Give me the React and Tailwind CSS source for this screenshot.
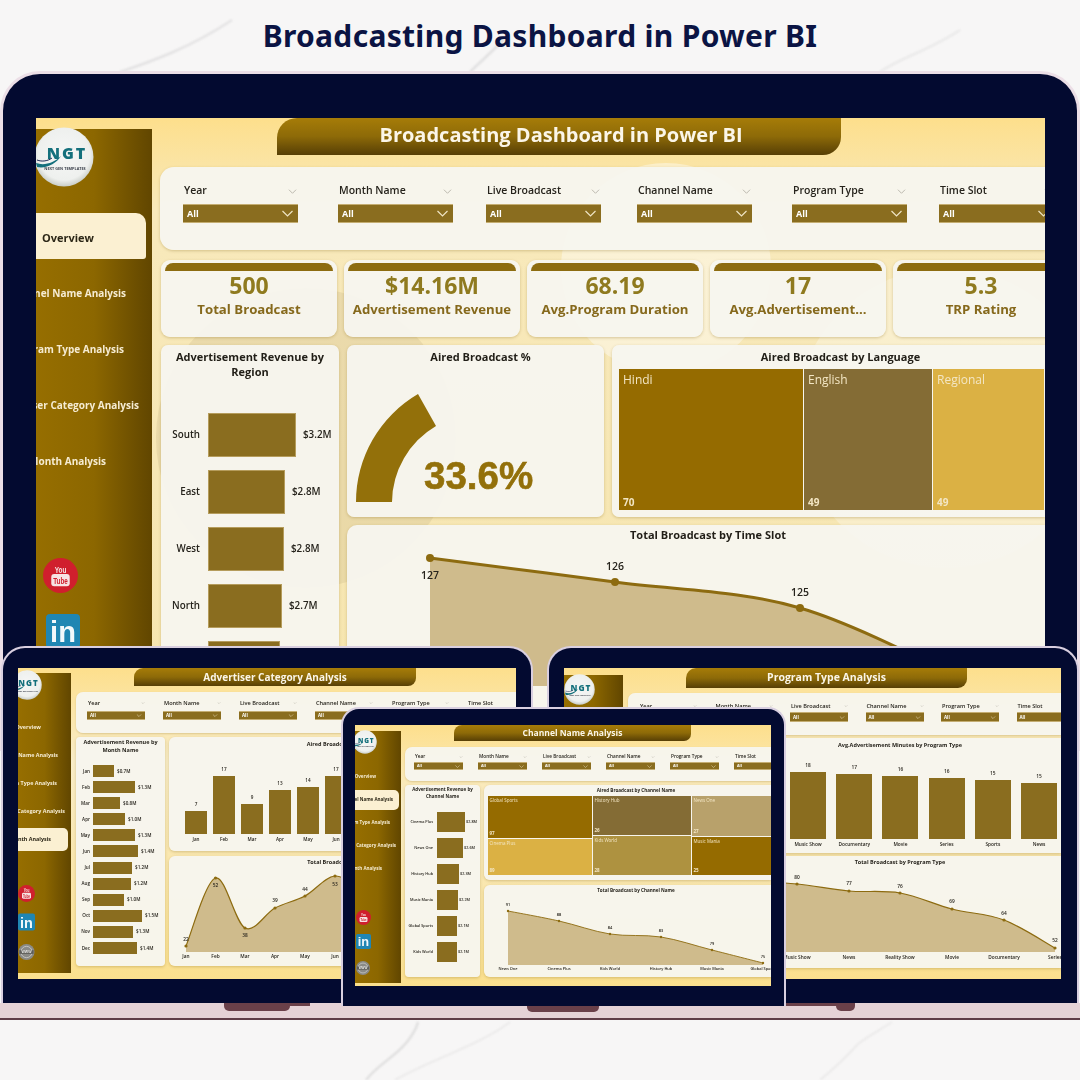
import React from 'react';

const BAR = 'bg-[#8a6d1f]';
const CARD = 'bg-[#f7f5ef]/95 shadow-[0_1px_3px_rgba(130,100,20,0.3)]';
const BAND = 'bg-gradient-to-b from-[#a67c08] via-[#8d6a08] to-[#573f05]';
const SIDE = 'bg-gradient-to-r from-[#966e00] via-[#8c6700] to-[#614600]';
const SCREEN = 'bg-gradient-to-b from-[#fddf8c] via-[#f9edc8] via-30% to-[#fbe08e]';
const BIGSCREEN = 'bg-gradient-to-b from-[#fddf8c] via-[#f8e9bb] via-15% to-[#f6e5ae]';

function smooth(pts) {
  let d = `M${pts[0][0]},${pts[0][1]}`;
  for (let i = 0; i < pts.length - 1; i++) {
    const p0 = pts[i - 1] || pts[i], p1 = pts[i], p2 = pts[i + 1], p3 = pts[i + 2] || p2;
    const c1x = p1[0] + (p2[0] - p0[0]) / 6, c1y = p1[1] + (p2[1] - p0[1]) / 6;
    const c2x = p2[0] - (p3[0] - p1[0]) / 6, c2y = p2[1] - (p3[1] - p1[1]) / 6;
    d += ` C${c1x},${c1y} ${c2x},${c2y} ${p2[0]},${p2[1]}`;
  }
  return d;
}

function LineChart({ box, pts, base, fs, sw = 1, r = 1.6, xfs, xy, className }) {
  const line = smooth(pts.map((p) => [p.x, p.y]));
  const area = `${line} L${pts[pts.length - 1].x},${base} L${pts[0].x},${base} Z`;
  return (
    <svg viewBox={box.join(' ')} width={box[2]} height={box[3]} className={'block flex-none ' + (className || '')}>
      <path d={area} fill="#cfbb8c" />
      <path d={line} fill="none" stroke="#8d6b10" strokeWidth={sw} />
      {pts.map((p) => (
        <g key={p.x}>
          <circle cx={p.x} cy={p.y} r={r} fill="#8d6b10" />
          <text x={p.x} y={p.ly} textAnchor="middle" fontSize={fs} fontWeight="600" fill="#26231c" fontFamily="'Open Sans',sans-serif">{p.v}</text>
          {p.n ? <text x={p.x} y={xy} textAnchor="middle" fontSize={xfs} fontWeight="600" fill="#26231c" fontFamily="'Open Sans',sans-serif">{p.n}</text> : null}
        </g>
      ))}
    </svg>
  );
}

function Chev({ className }) {
  return (
    <svg viewBox="0 0 12 7" className={className} fill="none" stroke="currentColor" strokeWidth="1.2">
      <path d="M1 1l5 5 5-5" />
    </svg>
  );
}

function Logo({ className }) {
  return (
    <svg viewBox="0 0 60 60" className={className}>
      <defs>
        <radialGradient id="lg" cx="50%" cy="45%" r="55%">
          <stop offset="0%" stopColor="#f6f7f6" />
          <stop offset="80%" stopColor="#eef0ee" />
          <stop offset="100%" stopColor="#c9cdc8" />
        </radialGradient>
      </defs>
      <circle cx="30" cy="30" r="29.5" fill="url(#lg)" />
      <text x="33" y="32" textAnchor="middle" fontSize="16" fontWeight="800" letterSpacing="2" fill="#14707c" fontFamily="'Open Sans',sans-serif">NGT</text>
      <path d="M2 36 C10 39 20 36 27 29 C22 37 12 42 3 40 Z" fill="#14707c" />
      <path d="M3 33 C8 35 14 34 18 31" fill="none" stroke="#1c2a55" strokeWidth="1" />
      <text x="31" y="43" textAnchor="middle" fontSize="3.8" fontWeight="700" fill="#3a3f4a" fontFamily="'Open Sans',sans-serif">NEXT GEN TEMPLATES</text>
    </svg>
  );
}

function YouTube({ className }) {
  return (
    <svg viewBox="0 0 36 36" className={className}>
      <circle cx="18" cy="18" r="18" fill="#d01f2d" />
      <text x="18" y="15" textAnchor="middle" fontSize="10" fontWeight="700" fill="#f6e4e4" fontFamily="'Liberation Sans',sans-serif" textLength="12" lengthAdjust="spacingAndGlyphs">You</text>
      <rect x="8.5" y="16.5" width="19" height="12.5" rx="3" fill="#f6e4e4" />
      <text x="18" y="26.5" textAnchor="middle" fontSize="9.5" fontWeight="700" fill="#d01f2d" fontFamily="'Liberation Sans',sans-serif" textLength="15" lengthAdjust="spacingAndGlyphs">Tube</text>
    </svg>
  );
}

function LinkedIn({ className }) {
  return (
    <svg viewBox="0 0 34 34" className={className}>
      <rect width="34" height="34" rx="4" fill="#1f86b3" />
      <text x="17" y="28" textAnchor="middle" fontSize="29" fontWeight="700" fill="#f2f8fb" fontFamily="'Liberation Sans',sans-serif">in</text>
    </svg>
  );
}

function Globe({ className }) {
  return (
    <svg viewBox="0 0 34 34" className={className}>
      <circle cx="17" cy="17" r="17" fill="#8a8a86" />
      <circle cx="17" cy="17" r="12" fill="none" stroke="#d8d8d4" strokeWidth="1.5" />
      <rect x="2" y="13" width="30" height="8" fill="#5e5e5a" />
      <text x="17" y="20" textAnchor="middle" fontSize="7.5" fontWeight="700" fill="#f0f0ee" fontFamily="'Liberation Sans',sans-serif">WWW</text>
    </svg>
  );
}

const LABELS = ['Year', 'Month Name', 'Live Broadcast', 'Channel Name', 'Program Type', 'Time Slot'];

function MiniFilters({ panel, item, label, dd, all, chev, small }) {
  return (
    <div className={'relative flex rounded-l-[7px] bg-[#f7f5ef]/95 shadow-[0_1px_2px_rgba(130,100,20,0.25)] ' + panel}>
      {LABELS.map((t) => (
        <div key={t} className={'flex-none ' + item}>
          <div className={'flex items-center justify-between font-semibold text-[#26231c] whitespace-nowrap ' + label}>
            <span>{t}</span>
            <Chev className={'text-[#a8a49a] ' + small} />
          </div>
          <div className={'flex items-center justify-between border-t border-b border-[#c4ad72] px-[3px] ' + BAR + ' ' + dd}>
            <span className={'font-bold text-white ' + all}>All</span>
            <Chev className={'text-[#efe4c4] ' + chev} />
          </div>
        </div>
      ))}
    </div>
  );
}

function MenuRow({ t, w, h, active, fs, tab }) {
  if (active) {
    return (
      <div className={'flex items-center justify-end rounded-r-[5px] bg-[#fbf0d2] font-bold text-[#2b2616] whitespace-nowrap ' + tab + ' ' + fs}>
        <span>{t}</span>
      </div>
    );
  }
  return (
    <div className={'flex items-center justify-end font-bold text-[#f6ecd2] whitespace-nowrap ' + w + ' ' + h + ' ' + fs}>
      <span>{t}</span>
    </div>
  );
}

function Treemap({ cols, fs, className }) {
  return (
    <div className={'flex ' + className}>
      {cols.map((c) => (
        <div key={c.w} className={'flex flex-none flex-col gap-[1px] ' + c.w}>
          {c.cells.map((x) => (
            <div key={x.t} className={'flex flex-col justify-between px-[1.5px] py-[1px] text-[#f3e6c4] ' + x.h + ' ' + x.c + ' ' + fs}>
              <span>{x.t}</span>
              <span className="font-bold">{x.v}</span>
            </div>
          ))}
        </div>
      ))}
    </div>
  );
}

/* ---------- big laptop ---------- */
function Big() {
  const filters = [
    ['Year', 'w-[155px]'], ['Month Name', 'w-[148px]'], ['Live Broadcast', 'w-[151px]'],
    ['Channel Name', 'w-[155px]'], ['Program Type', 'w-[147px]'], ['Time Slot', 'w-[147px]'],
  ];
  const kpis = [
    ['500', 'Total Broadcast'], ['$14.16M', 'Advertisement Revenue'], ['68.19', 'Avg.Program Duration'],
    ['17', 'Avg.Advertisement...'], ['5.3', 'TRP Rating'],
  ];
  const regions = [
    ['South', 88, '$3.2M'], ['East', 77, '$2.8M'], ['West', 76, '$2.8M'], ['North', 74, '$2.7M'], ['Central', 72, '$2.6M'],
  ];
  return (
    <div className="absolute left-0 top-[71px] h-[680px] w-[1080px] rounded-t-[40px] border-x-[3px] border-t-[3px] border-[#ecdfe7] bg-[#030a30] pl-[33px] pt-[44px]">
      <div className={'relative flex h-[620px] w-[1009px] overflow-hidden blur-[0.3px] ' + BIGSCREEN}>
        <div className="absolute left-[525px] top-[45px] h-[210px] w-[210px] rounded-full bg-white/40" />
        <div className="absolute left-[120px] top-[170px] h-[300px] w-[300px] rounded-full bg-[#b9a778]/20" />
        <div className="absolute left-[760px] top-[150px] h-[300px] w-[300px] rounded-full bg-white/30" />

        <div className={'relative mt-[11px] flex w-[116px] flex-none flex-col ' + SIDE}>
          <Logo className="-ml-[2px] -mt-[2px] h-[60px] w-[60px]" />
          <div className="mt-[26px] flex h-[46px] w-[110px] items-center rounded-tr-[10px] rounded-br-[3px] bg-[#fbf0d2] pl-[6px] pt-[4px] text-[11px] font-bold text-[#2b2616]">Overview</div>
          <div className="mt-[6px]">
            <MenuRow t="Channel Name Analysis" w="w-[90px]" h="h-[56px]" fs="text-[10px]" />
            <MenuRow t="Program Type Analysis" w="w-[88px]" h="h-[56px]" fs="text-[10px]" />
            <MenuRow t="Advertiser Category Analysis" w="w-[103px]" h="h-[56px]" fs="text-[10px]" />
            <MenuRow t="Month Analysis" w="w-[70px]" h="h-[56px]" fs="text-[10px]" />
          </div>
          <YouTube className="ml-[7px] mt-[69px] h-[35px] w-[35px] flex-none" />
          <LinkedIn className="ml-[10px] mt-[21px] h-[34px] w-[34px] flex-none" />
        </div>

        <div className="relative flex w-[893px] flex-none flex-col">
          <div className={'ml-[125px] flex h-[37px] w-[564px] flex-none items-center justify-center rounded-tl-[20px] rounded-br-[18px] pb-[3px] pl-[4px] text-[20px] font-bold text-[#fbf6e8] ' + BAND}>
            <span>Broadcasting Dashboard in Power BI</span>
          </div>

          <div className="ml-[8px] mt-[12px] flex h-[83px] w-[885px] flex-none rounded-l-[14px] bg-[#f7f5ef]/95 pl-[23px] pt-[17px] shadow-[0_1px_3px_rgba(130,100,20,0.3)]">
            {filters.map(([t, w]) => (
              <div key={t} className={'flex-none ' + w}>
                <div className="flex h-[14px] w-[115px] items-center justify-between pl-[1px] pr-[1px] text-[10.5px] font-semibold text-[#26231c] whitespace-nowrap">
                  <span>{t}</span>
                  <Chev className="h-[5px] w-[9px] text-[#b4b0a6]" />
                </div>
                <div className={'mt-[6px] flex h-[19px] w-[115px] items-center justify-between border-y border-[#c4ad72] px-[4px] ' + BAR}>
                  <span className="text-[9px] font-bold text-white">All</span>
                  <Chev className="h-[7px] w-[13px] text-[#efe4c4]" />
                </div>
              </div>
            ))}
          </div>

          <div className="ml-[9px] mt-[10px] flex flex-none gap-[7px]">
            {kpis.map(([v, l]) => (
              <div key={l} className={'h-[77px] w-[176px] flex-none rounded-[9px] px-[4px] pt-[3px] text-center ' + CARD}>
                <div className="h-[8px] rounded-t-[8px] bg-[#8d6c10]" />
                <div className="mt-[1px] text-[23px] font-bold leading-[26px] text-[#8f7a1f]">{v}</div>
                <div className="mt-[1px] text-[13.2px] font-bold leading-[20px] text-[#86691c] whitespace-nowrap">{l}</div>
              </div>
            ))}
          </div>

          <div className="ml-[9px] mt-[8px] flex flex-none gap-[8px]">
            <div className={'h-[400px] w-[178px] flex-none rounded-[7px] pt-[4px] ' + CARD}>
              <div className="text-center text-[11px] font-bold leading-[15px] text-[#211e17]">Advertisement Revenue by<br />Region</div>
              <div className="mt-[34px] flex flex-col gap-[13px]">
                {regions.map(([n, w, v]) => (
                  <div key={n} className="flex h-[44px] items-center text-[9.8px] font-semibold text-[#26231c]">
                    <span className="w-[39px] text-right">{n}</span>
                    <div className={'ml-[8px] h-full border border-[#b59c5c] ' + BAR} style={{ width: w }} />
                    <span className="ml-[7px]">{v}</span>
                  </div>
                ))}
              </div>
            </div>

            <div className="flex w-[698px] flex-none flex-col gap-[8px]">
              <div className="flex h-[172px] gap-[8px]">
                <div className={'relative h-full w-[257px] flex-none rounded-[7px] pt-[4px] ' + CARD}>
                  <div className="pl-[10px] text-center text-[11px] font-bold leading-[16px] text-[#211e17]">Aired Broadcast %</div>
                  <div className="mt-[5px] flex h-[124px] items-end">
                    <svg viewBox="357 394 80 108" width="80" height="108" className="ml-[9px] mb-[-8px] flex-none">
                      <path d="M357,502 A125,125 0 0 1 419,394 L437,426 A89,89 0 0 0 393,502 Z" fill="#93700a" />
                    </svg>
                    <span className="-ml-[12px] mb-[-2px] text-[38.5px] font-bold leading-[40px] text-[#93700a] [-webkit-text-stroke:0.6px_#93700a] [font-family:'Liberation_Sans',sans-serif]">33.6%</span>
                  </div>
                </div>
                <div className={'h-full w-[433px] flex-none rounded-l-[7px] pt-[4px] ' + CARD}>
                  <div className="pl-[24px] text-center text-[11px] font-bold leading-[16px] text-[#211e17]">Aired Broadcast by Language</div>
                  <div className="ml-[7px] mt-[4px] flex h-[141px] gap-[1px] text-[12px] text-[#f3e6c4]">
                    <div className="flex w-[184px] flex-none flex-col justify-between bg-[#956b00] px-[4px] pt-[2px]"><span>Hindi</span><span className="text-[10px] font-bold">70</span></div>
                    <div className="flex w-[128px] flex-none flex-col justify-between bg-[#846c35] px-[4px] pt-[2px]"><span>English</span><span className="text-[10px] font-bold">49</span></div>
                    <div className="flex w-[111px] flex-none flex-col justify-between bg-[#dbb144] px-[4px] pt-[2px]"><span>Regional</span><span className="text-[10px] font-bold">49</span></div>
                  </div>
                </div>
              </div>

              <div className={'h-[240px] rounded-l-[10px] pt-[2px] ' + CARD}>
                <div className="pl-[24px] text-center text-[11px] font-bold leading-[16px] text-[#211e17]">Total Broadcast by Time Slot</div>
                <LineChart
                  box={[347, 543, 698, 160]}
                  base={686}
                  fs={10.5}
                  sw={3}
                  r={4}
                  pts={[
                    { x: 430, y: 558, ly: 579, v: '127' },
                    { x: 615, y: 582, ly: 570, v: '126' },
                    { x: 800, y: 608, ly: 596, v: '125' },
                    { x: 985, y: 690, ly: 680, v: '' },
                  ]}
                />
              </div>
            </div>
          </div>
        </div>
      </div>
    </div>
  );
}

/* ---------- left small laptop ---------- */
function LeftLaptop() {
  const months = [['Jan', 21, '$0.7M'], ['Feb', 42, '$1.3M'], ['Mar', 27, '$0.8M'], ['Apr', 32, '$1.0M'], ['May', 42, '$1.3M'], ['Jun', 45, '$1.4M'], ['Jul', 39, '$1.2M'], ['Aug', 38, '$1.2M'], ['Sep', 31, '$1.0M'], ['Oct', 49, '$1.5M'], ['Nov', 40, '$1.3M'], ['Dec', 44, '$1.4M']];
  const bars = [['Jan', 7, 23], ['Feb', 17, 58], ['Mar', 9, 30], ['Apr', 13, 44], ['May', 14, 47], ['Jun', 17, 58]];
  return (
    <div className="absolute left-[1px] top-[646px] h-[357px] w-[532px] rounded-t-[24px] border-x-2 border-t-2 border-[#d9cfe0] bg-[#030a30] pl-[15px] pt-[20px]">
      <div className={'relative flex h-[311px] w-[498px] overflow-hidden blur-[0.3px] ' + SCREEN}>
        <div className={'mt-[5px] flex h-[300px] w-[53px] flex-none flex-col ' + SIDE}>
          <Logo className="-ml-[6px] -mt-[3px] h-[30px] w-[30px] flex-none" />
          <div className="mt-[13px] flex flex-col">
            <MenuRow t="Overview" w="w-[23px]" h="h-[28px]" fs="text-[5.4px]" />
            <MenuRow t="Channel Name Analysis" w="w-[40px]" h="h-[28px]" fs="text-[5.4px]" />
            <MenuRow t="Program Type Analysis" w="w-[39px]" h="h-[28px]" fs="text-[5.4px]" />
            <MenuRow t="Advertiser Category Analysis" w="w-[47px]" h="h-[28px]" fs="text-[5.4px]" />
            <MenuRow active t="Month Analysis" fs="text-[5.4px]" tab="h-[23px] w-[50px] pr-[17px] my-[3px]" />
          </div>
          <YouTube className="mt-[31px] h-[17px] w-[17px] flex-none" />
          <LinkedIn className="mt-[11px] h-[18px] w-[17px] flex-none" />
          <Globe className="mt-[13px] h-[16px] w-[17px] flex-none" />
        </div>
        <div className="flex w-[445px] flex-none flex-col">
          <div className={'ml-[63px] flex h-[18px] w-[282px] flex-none items-center justify-center rounded-tl-[9px] rounded-br-[8px] text-[10px] font-bold text-[#fbf6e8] ' + BAND}>Advertiser Category Analysis</div>
          <MiniFilters
            panel="ml-[5px] mt-[6px] h-[41px] w-[440px] flex-none pl-[11px] pt-[7px]"
            item="w-[76px]"
            label="h-[8px] w-[58px] text-[5.6px] pl-[1px]"
            dd="mt-[4px] h-[9px] w-[58px]"
            all="text-[4.5px]"
            chev="h-[3px] w-[6px]"
            small="h-[2px] w-[4px]"
          />
          <div className="ml-[5px] mt-[4px] flex gap-[4px]">
            <div className={'h-[229px] w-[89px] flex-none rounded-[4px] pt-[1px] ' + CARD}>
              <div className="text-center text-[5.5px] font-bold leading-[8px] text-[#211e17]">Advertisement Revenue by<br />Month Name</div>
              <div className="mt-[11px] flex flex-col gap-[4.1px]">
                {months.map(([m, w, v]) => (
                  <div key={m} className="flex h-[12px] items-center text-[4.6px] font-semibold text-[#26231c]">
                    <span className="w-[14px] text-right">{m}</span>
                    <div className={'ml-[3px] h-full ' + BAR} style={{ width: w }} />
                    <span className="ml-[3px]">{v}</span>
                  </div>
                ))}
              </div>
            </div>
            <div className="flex w-[347px] flex-none flex-col gap-[5px]">
              <div className={'h-[114px] rounded-l-[6px] pt-[3px] ' + CARD}>
                <div className="pl-[18px] text-center text-[5.5px] font-bold leading-[8px] text-[#211e17]">Aired Broadcast by Month Name</div>
                <div className="ml-[13px] mt-[15px] flex h-[80px] items-end">
                  {bars.map(([m, v, h]) => (
                    <div key={m} className="flex w-[28px] flex-none flex-col items-center text-[4.6px] font-semibold text-[#26231c]">
                      <span className="mb-[3px]">{v}</span>
                      <div className={'w-[22px] ' + BAR} style={{ height: h }} />
                      <span className="mt-[2px] h-[7px]">{m}</span>
                    </div>
                  ))}
                </div>
              </div>
              <div className={'h-[110px] rounded-l-[6px] pt-[2px] ' + CARD}>
                <div className="pl-[18px] text-center text-[5.5px] font-bold leading-[8px] text-[#211e17]">Total Broadcast by Month Name</div>
                <LineChart
                  box={[169, 866, 347, 100]}
                  base={952}
                  fs={4.8}
                  xfs={4.8}
                  xy={958}
                  sw={1.2}
                  r={1.6}
                  pts={[
                    { x: 186, y: 946, ly: 941, v: '22', n: 'Jan' },
                    { x: 215.5, y: 878, ly: 887, v: '52', n: 'Feb' },
                    { x: 245, y: 928, ly: 937, v: '38', n: 'Mar' },
                    { x: 275, y: 908, ly: 902, v: '39', n: 'Apr' },
                    { x: 305, y: 896, ly: 891, v: '44', n: 'May' },
                    { x: 335, y: 876, ly: 886, v: '53', n: 'Jun' },
                    { x: 365, y: 892, ly: 887, v: '', n: '' },
                  ]}
                />
              </div>
            </div>
          </div>
        </div>
      </div>
    </div>
  );
}

/* ---------- right small laptop ---------- */
function RightLaptop() {
  const bars = [['Music Show', 18, 67], ['Documentary', 17, 65], ['Movie', 16, 63], ['Series', 16, 61], ['Sports', 15, 59], ['News', 15, 56]];
  return (
    <div className="absolute left-[547px] top-[646px] h-[357px] w-[532px] rounded-t-[24px] border-x-2 border-t-2 border-[#d9cfe0] bg-[#030a30] pl-[15px] pt-[20px]">
      <div className={'relative flex h-[311px] w-[497px] overflow-hidden blur-[0.3px] ' + SCREEN}>
        <div className={'mt-[7px] flex h-[298px] w-[59px] flex-none flex-col ' + SIDE}>
          <Logo className="-mt-[1px] h-[31px] w-[31px] flex-none" />
        </div>
        <div className="flex w-[438px] flex-none flex-col">
          <div className={'ml-[63px] flex h-[20px] w-[281px] flex-none items-center justify-center rounded-tl-[10px] rounded-br-[9px] text-[10.5px] font-bold text-[#fbf6e8] ' + BAND}>Program Type Analysis</div>
          <MiniFilters
            panel="ml-[5px] mt-[5px] h-[42px] w-[433px] flex-none pl-[11px] pt-[9px]"
            item="w-[75.5px]"
            label="h-[8px] w-[58px] text-[5.6px] pl-[1px]"
            dd="mt-[2px] h-[10px] w-[58px]"
            all="text-[4.5px]"
            chev="h-[3px] w-[6px]"
            small="h-[2px] w-[4px]"
          />
          <div className="ml-[5px] mt-[3px] flex gap-[4px]">
            <div className={'h-[229px] w-[107px] flex-none rounded-[4px] ' + CARD} />
            <div className="flex w-[322px] flex-none flex-col gap-[3px]">
              <div className={'h-[115px] rounded-l-[6px] pt-[3px] ' + CARD}>
                <div className="text-center text-[5.5px] font-bold leading-[8px] text-[#211e17]">Avg.Advertisement Minutes by Program Type</div>
                <div className="ml-[46px] mt-[14px] flex h-[85px] items-end">
                  {bars.map(([m, v, h]) => (
                    <div key={m} className="flex w-[46.2px] flex-none flex-col items-center text-[4.8px] font-semibold text-[#26231c]">
                      <span className="mb-[3px]">{v}</span>
                      <div className={'w-[36px] ' + BAR} style={{ height: h }} />
                      <span className="mt-[2px] h-[7px]">{m}</span>
                    </div>
                  ))}
                </div>
              </div>
              <div className={'h-[112px] rounded-l-[6px] pt-[2px] ' + CARD}>
                <div className="text-center text-[5.5px] font-bold leading-[8px] text-[#211e17]">Total Broadcast by Program Type</div>
                <LineChart
                  box={[739, 866, 322, 100]}
                  base={952}
                  fs={4.8}
                  xfs={4.8}
                  xy={959}
                  sw={1.2}
                  r={1.6}
                  pts={[
                    { x: 741, y: 880, ly: 874, v: '', n: '' },
                    { x: 797, y: 884, ly: 879, v: '80', n: 'Music Show' },
                    { x: 849, y: 891, ly: 885, v: '77', n: 'News' },
                    { x: 900, y: 893, ly: 888, v: '76', n: 'Reality Show' },
                    { x: 952, y: 909, ly: 903, v: '69', n: 'Movie' },
                    { x: 1004, y: 920, ly: 915, v: '64', n: 'Documentary' },
                    { x: 1055, y: 948, ly: 942, v: '52', n: 'Series' },
                  ]}
                />
              </div>
            </div>
          </div>
        </div>
      </div>
    </div>
  );
}

/* ---------- middle laptop ---------- */
function MidLaptop() {
  const rows = [['Cinema Plus', 28, '$2.8M'], ['News One', 26, '$2.6M'], ['History Hub', 22, '$2.3M'], ['Music Mania', 21, '$2.2M'], ['Global Sports', 20, '$2.1M'], ['Kids World', 20, '$2.1M']];
  const cols = [
    { w: 'w-[104px]', cells: [{ t: 'Global Sports', v: '97', h: 'h-[42px]', c: 'bg-[#956b00]' }, { t: 'Cinema Plus', v: '89', h: 'h-[36px]', c: 'bg-[#dbb144]' }] },
    { w: 'w-[98px]', cells: [{ t: 'History Hub', v: '26', h: 'h-[39px]', c: 'bg-[#846c35]' }, { t: 'Kids World', v: '28', h: 'h-[39px]', c: 'bg-[#ae9240]' }] },
    { w: 'w-[80px]', cells: [{ t: 'News One', v: '27', h: 'h-[40px]', c: 'bg-[#b8a16b]' }, { t: 'Music Mania', v: '25', h: 'h-[38px]', c: 'bg-[#956b00]' }] },
  ];
  return (
    <div className="absolute left-[341px] top-[707px] h-[299px] w-[445px] rounded-t-[18px] border-x-2 border-t-2 border-[#d9cfe0] bg-[#030a30] pl-[12px] pt-[16px]">
      <div className={'relative flex h-[261px] w-[416px] overflow-hidden blur-[0.3px] ' + SCREEN}>
        <div className={'mt-[6px] flex h-[252px] w-[46px] flex-none flex-col ' + SIDE}>
          <Logo className="-ml-[2px] -mt-[1px] h-[24px] w-[24px] flex-none" />
          <div className="mt-[11px] flex flex-col">
            <MenuRow t="Overview" w="w-[21px]" h="h-[23px]" fs="text-[4.5px]" />
            <MenuRow active t="Channel Name Analysis" fs="text-[4.5px]" tab="h-[20px] w-[44px] pr-[6px] my-[1.5px]" />
            <MenuRow t="Program Type Analysis" w="w-[35px]" h="h-[23px]" fs="text-[4.5px]" />
            <MenuRow t="Advertiser Category Analysis" w="w-[41px]" h="h-[23px]" fs="text-[4.5px]" />
            <MenuRow t="Month Analysis" w="w-[27px]" h="h-[23px]" fs="text-[4.5px]" />
          </div>
          <YouTube className="ml-[1px] mt-[30px] h-[15px] w-[15px] flex-none" />
          <LinkedIn className="ml-[1px] mt-[9px] h-[15px] w-[15px] flex-none" />
          <Globe className="ml-[1px] mt-[12px] h-[14px] w-[14px] flex-none" />
        </div>
        <div className="flex w-[370px] flex-none flex-col">
          <div className={'ml-[53px] flex h-[16px] w-[237px] flex-none items-center justify-center rounded-tl-[8px] rounded-br-[7px] text-[8.5px] font-bold text-[#fbf6e8] ' + BAND}>Channel Name Analysis</div>
          <MiniFilters
            panel="ml-[4px] mt-[6px] h-[34px] w-[366px] flex-none pl-[9px] pt-[6px]"
            item="w-[64px]"
            label="h-[7px] w-[49px] text-[4.7px] pl-[1px]"
            dd="mt-[2px] h-[8px] w-[49px]"
            all="text-[3.8px]"
            chev="h-[3px] w-[5px]"
            small="h-[2px] w-[4px]"
          />
          <div className="ml-[4px] mt-[4px] flex gap-[4px]">
            <div className={'h-[192px] w-[75px] flex-none rounded-[4px] pt-[1px] ' + CARD}>
              <div className="text-center text-[4.5px] font-bold leading-[6.5px] text-[#211e17]">Advertisement Revenue by<br />Channel Name</div>
              <div className="mt-[13px] flex flex-col gap-[6px]">
                {rows.map(([n, w, v]) => (
                  <div key={n} className="flex h-[20px] items-center text-[3.8px] font-semibold text-[#26231c]">
                    <span className="w-[28px] flex-none text-right whitespace-nowrap">{n}</span>
                    <div className={'ml-[4px] h-full flex-none ' + BAR} style={{ width: w }} />
                    <span className="ml-[1px] whitespace-nowrap">{v}</span>
                  </div>
                ))}
              </div>
            </div>
            <div className="flex w-[287px] flex-none flex-col gap-[5px]">
              <div className={'h-[95px] rounded-l-[6px] pt-[2px] ' + CARD}>
                <div className="pl-[17px] text-center text-[4.6px] font-bold leading-[7px] text-[#211e17]">Aired Broadcast by Channel Name</div>
                <Treemap cols={cols} fs="text-[4.5px]" className="ml-[4px] mt-[2px] gap-[1px]" />
              </div>
              <div className={'h-[92px] rounded-l-[6px] pt-[2px] ' + CARD}>
                <div className="pl-[17px] text-center text-[4.6px] font-bold leading-[7px] text-[#211e17]">Total Broadcast by Channel Name</div>
                <LineChart
                  box={[484, 894, 287, 80]}
                  base={965}
                  fs={3.9}
                  xfs={3.9}
                  xy={970}
                  sw={0.9}
                  r={1.2}
                  pts={[
                    { x: 508, y: 911, ly: 906, v: '91', n: 'News One' },
                    { x: 559, y: 921, ly: 916, v: '88', n: 'Cinema Plus' },
                    { x: 610, y: 934, ly: 929, v: '84', n: 'Kids World' },
                    { x: 661, y: 937, ly: 932, v: '83', n: 'History Hub' },
                    { x: 712, y: 950, ly: 945, v: '79', n: 'Music Mania' },
                    { x: 763, y: 963, ly: 958, v: '75', n: 'Global Sports' },
                  ]}
                />
              </div>
            </div>
          </div>
        </div>
      </div>
    </div>
  );
}

function Marble() {
  return (
    <svg viewBox="0 0 1080 1080" className="absolute left-0 top-0 h-[1080px] w-[1080px] blur-[1.2px]">
      <g fill="none" stroke="#a9a9ab">
        <path d="M120 72 C150 62 190 48 232 20" strokeWidth="2" opacity="0.3" />
        <path d="M470 72 C480 62 492 52 505 38" strokeWidth="2" opacity="0.35" />
        <path d="M880 72 C900 58 930 50 960 30" strokeWidth="2" opacity="0.2" />
        <path d="M366 1080 C380 1062 398 1056 410 1038 C415 1030 416 1030 418 1022" strokeWidth="1.8" opacity="0.4" />
        <path d="M395 1080 C430 1060 480 1045 510 1022" strokeWidth="1.5" opacity="0.2" />
        <path d="M820 1080 C835 1068 848 1055 858 1044 C868 1036 880 1030 892 1022" strokeWidth="1.5" opacity="0.2" />
      </g>
    </svg>
  );
}

export default function App() {
  return (
    <div className="relative h-[1080px] w-[1080px] overflow-hidden bg-[#f7f6f6] [font-family:'Open_Sans',sans-serif]">
      <Marble />
      <h1 className="relative pt-[16px] text-center text-[30px] font-bold leading-[40px] tracking-[0.3px] text-[#0b1444] [font-family:'Noto_Sans',sans-serif]">Broadcasting Dashboard in Power BI</h1>
      <Big />
      <div className="absolute left-0 top-[1003px] h-[17px] w-[1080px] border-b-2 border-[#5f3d47] bg-[#e5d2d6]">
        <div className="absolute left-[224px] top-0 h-[8px] w-[66px] rounded-b-[5px] bg-[#6a4049]" />
        <div className="absolute left-[290px] top-0 h-[3px] w-[20px] bg-[#6a4049]" />
        <div className="absolute left-[527px] top-0 h-[9px] w-[72px] rounded-b-[5px] bg-[#6a4049]" />
        <div className="absolute left-[786px] top-0 h-[3px] w-[50px] bg-[#6a4049]" />
        <div className="absolute left-[836px] top-0 h-[8px] w-[19px] rounded-b-[5px] bg-[#6a4049]" />
      </div>
      <LeftLaptop />
      <RightLaptop />
      <MidLaptop />
    </div>
  );
}
